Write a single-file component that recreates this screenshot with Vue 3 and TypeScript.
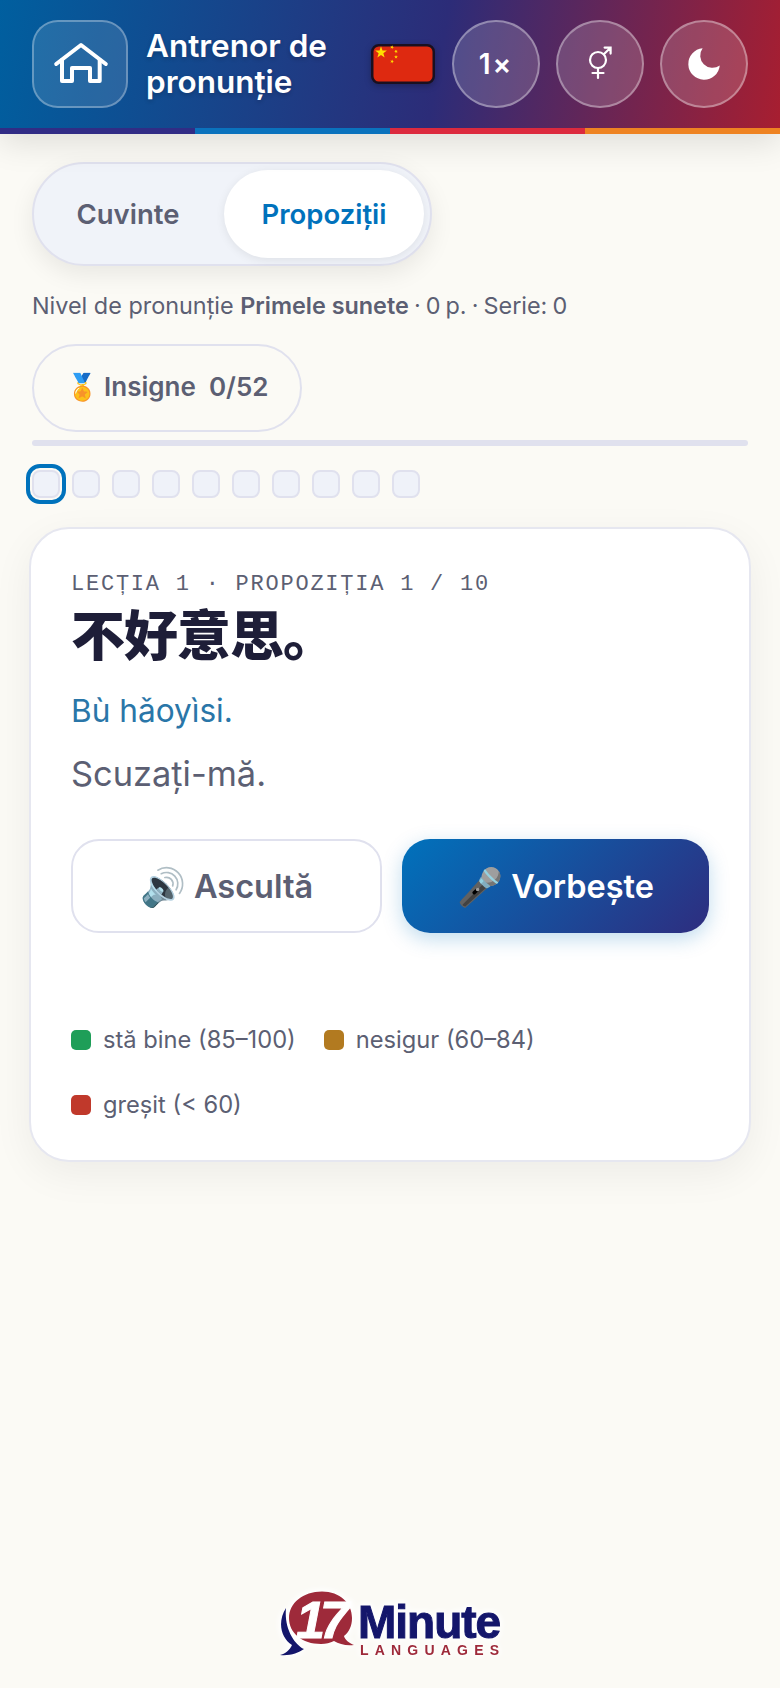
<template>
  <div class="page">
    <header class="topbar">
      <button class="home-btn" aria-label="Acasă">
        <svg viewBox="0 0 60 60" width="60" height="60" fill="none" stroke="#fff" stroke-width="4" stroke-linecap="round" stroke-linejoin="round">
          <path d="M6.2 30 L31 11 L55.8 30" />
          <path d="M12 26 V47 H22 V34 H40 V47 H49.7 V26" />
        </svg>
      </button>
      <h1 class="title">Antrenor de pronunție</h1>
      <svg class="flag" viewBox="0 0 64 40" width="64" height="40">
        <rect x="1.25" y="1.25" width="61.5" height="37.5" rx="6.5" fill="#de2910" stroke="#1a1020" stroke-width="2.5" />
        <polygon :points="star(10, 8.5, 6.2, 0)" fill="#ffde00" />
        <polygon :points="star(21, 3.2, 2, 20)" fill="#ffde00" />
        <polygon :points="star(25, 7.5, 2, 40)" fill="#ffde00" />
        <polygon :points="star(25, 13, 2, 0)" fill="#ffde00" />
        <polygon :points="star(21, 17.5, 2, 20)" fill="#ffde00" />
      </svg>
      <button class="round-btn speed">1×</button>
      <button class="round-btn" aria-label="Gen">
        <svg viewBox="0 0 40 40" width="40" height="40" fill="none" stroke="#fff" stroke-width="2.2" stroke-linecap="round">
          <circle cx="18" cy="16" r="8" />
          <path d="M18 24 V34 M12.5 29 H23.5" />
          <path d="M23.8 10.2 L30 4.2 M24.6 3.6 H30.6 V9.6" />
        </svg>
      </button>
      <button class="round-btn" aria-label="Temă">
        <svg viewBox="0 0 24 24" width="42" height="42" fill="#fff">
          <path d="M21 12.79A9 9 0 1 1 11.21 3 7 7 0 0 0 21 12.79z" />
        </svg>
      </button>
    </header>

    <main class="content">
      <div class="tabs">
        <button class="tab">Cuvinte</button>
        <button class="tab active">Propoziții</button>
      </div>

      <p class="status">Nivel de pronunție <b>Primele sunete</b><span class="score"> · 0 p. · Serie: 0</span></p>

      <button class="badges">🏅 Insigne&nbsp; 0/52</button>

      <div class="progress"></div>

      <div class="steps">
        <span v-for="n in 10" :key="n" class="step" :class="{ current: n === 1 }"></span>
      </div>

      <section class="card">
        <div class="label">LECȚIA 1 · PROPOZIȚIA 1 / 10</div>
        <div class="hanzi" lang="zh-CN">不好意思。</div>
        <div class="pinyin">Bù hǎoyìsi.</div>
        <div class="translation">Scuzați-mă.</div>

        <div class="actions">
          <button class="action listen"><span class="emoji">🔊</span> Ascultă</button>
          <button class="action speak"><span class="emoji">🎤</span> Vorbește</button>
        </div>

        <ul class="legend">
          <li v-for="item in legend" :key="item.text">
            <span class="swatch" :style="{ background: item.color }"></span>
            {{ item.text }}
          </li>
        </ul>
      </section>
    </main>

    <footer class="footer">
      <svg class="logo" viewBox="0 0 260 110" width="260" height="110">
        <path d="M26 38 C17 52 21 68 32 75 C30 80 25 84 20 85 C30 86 38 83 44 79 C34 74 24 58 26 38z" fill="#14166b" />
        <path d="M62 21.5 C80 21.5 92 33 92 48 C92 56 89 62 84 66 C85 70 89 73 94 75 C86 76 79 74 74 71 C70 73 66 74 61 74 C42 74 29 63 29 48 C29 33 43 21.5 62 21.5z" fill="#9e2a3a" />
        <text class="logo-num" x="36" y="68">17</text>
        <text class="logo-word" x="98" y="68">Minute</text>
        <text class="logo-sub" x="100" y="85">LANGUAGES</text>
      </svg>
    </footer>
  </div>
</template>

<script setup lang="ts">
const legend = [
  { color: "#1e9e58", text: "stă bine (85–100)" },
  { color: "#b27a20", text: "nesigur (60–84)" },
  { color: "#c0392b", text: "greșit (< 60)" },
];

// five-pointed star, returned as polygon points
function star(cx: number, cy: number, r: number, rot: number): string {
  const pts: string[] = [];
  for (let i = 0; i < 10; i++) {
    const rad = i % 2 === 0 ? r : r * 0.4;
    const a = ((i * 36 - 90 + rot) * Math.PI) / 180;
    pts.push(`${(cx + rad * Math.cos(a)).toFixed(2)},${(cy + rad * Math.sin(a)).toFixed(2)}`);
  }
  return pts.join(" ");
}
</script>

<style>
html,
body {
  margin: 0;
  background: #fbfaf5;
}
</style>

<style scoped>
.page {
  min-height: 1688px;
  display: flex;
  flex-direction: column;
  box-sizing: border-box;
  background: #fbfaf5;
  font-family: Inter, "Noto Sans CJK SC", sans-serif;
  color: #5c5f73;
}

button {
  font-family: inherit;
  padding: 0;
  cursor: pointer;
}

.topbar {
  position: relative;
  display: flex;
  align-items: center;
  box-sizing: border-box;
  height: 134px;
  padding: 20px 32px 26px;
  background: linear-gradient(100deg, #005f9f 0%, #2c2c78 56%, #a81e30 100%);
  box-shadow: 0 8px 32px rgba(0, 0, 0, 0.12);
}

.topbar::after {
  content: "";
  position: absolute;
  left: 0;
  right: 0;
  bottom: 0;
  height: 6px;
  background: linear-gradient(
    90deg,
    #312c85 0 25%,
    #0a72bd 25% 50%,
    #dc2a3e 50% 75%,
    #ee8322 75% 100%
  );
}

.home-btn {
  flex: none;
  display: flex;
  align-items: center;
  justify-content: center;
  width: 96px;
  height: 88px;
  border: 2px solid rgba(255, 255, 255, 0.3);
  border-radius: 26px;
  background: rgba(255, 255, 255, 0.12);
}

.title {
  flex: none;
  width: 225px;
  margin: 0 0 0 18px;
  font-size: 31.5px;
  line-height: 36px;
  font-weight: 600;
  color: #fff;
  text-shadow: 0 2px 4px rgba(0, 0, 0, 0.2);
}

.flag {
  flex: none;
  filter: drop-shadow(0 2px 3px rgba(0, 0, 0, 0.25));
}

.round-btn {
  flex: none;
  display: flex;
  align-items: center;
  justify-content: center;
  box-sizing: border-box;
  width: 88px;
  height: 88px;
  margin-left: 16px;
  border: 2px solid rgba(255, 255, 255, 0.35);
  border-radius: 50%;
  background: rgba(255, 255, 255, 0.16);
  color: #fff;
}

.flag + .round-btn {
  margin-left: 17px;
}

.speed {
  font-size: 28px;
  font-weight: 600;
  letter-spacing: 2px;
}

.content {
  display: flex;
  flex-direction: column;
  align-items: flex-start;
  padding: 28px 32px 0;
}

.tabs {
  display: flex;
  gap: 8px;
  box-sizing: border-box;
  width: 400px;
  height: 104px;
  padding: 6px;
  border: 2px solid #e0e1ee;
  border-radius: 52px;
  background: #f0f3f9;
  box-shadow: 0 8px 24px rgba(0, 0, 0, 0.08);
}

.tab {
  flex: none;
  width: 176px;
  height: 88px;
  border: 0;
  border-radius: 44px;
  background: transparent;
  font-size: 27.5px;
  font-weight: 600;
  color: #5c5f73;
}

.tab.active {
  width: 200px;
  background: #fff;
  color: #0072bc;
  box-shadow: 0 2px 10px rgba(0, 0, 0, 0.08);
}

.status {
  margin: 24px 0 0;
  font-size: 23.4px;
  line-height: 32px;
}

.status b {
  font-weight: 600;
}

.score {
  word-spacing: -1.5px;
}

.badges {
  box-sizing: border-box;
  width: 270px;
  height: 88px;
  margin-top: 22px;
  padding-bottom: 4px;
  border: 2px solid #e0e1ee;
  border-radius: 44px;
  background: transparent;
  font-size: 26px;
  font-weight: 600;
  color: #5c5f73;
}

.progress {
  align-self: stretch;
  height: 6px;
  margin-top: 8px;
  border-radius: 3px;
  background: #e0e1ee;
}

.steps {
  display: flex;
  gap: 12px;
  margin-top: 24px;
}

.step {
  box-sizing: border-box;
  width: 28px;
  height: 28px;
  border: 2px solid #e0e1ee;
  border-radius: 8px;
  background: #eff2f9;
}

.step.current {
  outline: 4px solid #0072bc;
  outline-offset: 2px;
}

.card {
  align-self: stretch;
  box-sizing: border-box;
  height: 635px;
  margin: 29px -3px 0;
  padding: 42px 40px 40px;
  border: 2px solid #e6e7f0;
  border-radius: 40px;
  background: #fff;
  box-shadow: 0 12px 40px rgba(0, 0, 0, 0.06);
}

.label {
  font-family: "Liberation Mono", monospace;
  font-size: 22px;
  line-height: 28px;
  letter-spacing: 0.08em;
}

.hanzi {
  font-size: 54px;
  line-height: 76px;
  font-weight: 800;
  letter-spacing: -1px;
  color: #1e1e38;
}

.pinyin {
  margin-top: 16px;
  font-size: 31.6px;
  line-height: 40px;
  color: #2a76a8;
}

.translation {
  margin-top: 19px;
  font-size: 34.4px;
  line-height: 48px;
}

.actions {
  display: flex;
  gap: 20px;
  margin-top: 41px;
}

.action {
  flex: 1;
  height: 94px;
  border-radius: 28px;
  font-size: 32.5px;
  font-weight: 600;
}

.emoji {
  font-size: 37px;
  line-height: 1;
  vertical-align: -2px;
}

.listen {
  border: 2px solid #e0e1ee;
  background: #fff;
  color: #5c5f73;
}

.speak {
  border: 0;
  background: linear-gradient(135deg, #0072bc, #2e2d7f);
  color: #fff;
  box-shadow: 0 6px 20px rgba(0, 114, 188, 0.25);
}

.legend {
  display: flex;
  flex-wrap: wrap;
  gap: 29px 28px;
  margin: 89px 0 0;
  padding: 0;
  list-style: none;
  font-size: 23.7px;
  line-height: 36px;
}

.legend li {
  display: flex;
  align-items: center;
  gap: 12px;
}

.swatch {
  width: 20px;
  height: 20px;
  border-radius: 5px;
}

.footer {
  display: flex;
  justify-content: center;
  margin-top: auto;
  padding-bottom: 8px;
}

.logo {
  filter: drop-shadow(0 0 3px #fff) drop-shadow(0 0 3px #fff);
}

.logo-num {
  font-family: "Liberation Sans", sans-serif;
  font-size: 52px;
  font-weight: 700;
  font-style: italic;
  letter-spacing: -5px;
  fill: #fff;
  stroke: #fff;
  stroke-width: 1px;
}

.logo-word {
  font-family: "Liberation Sans", sans-serif;
  font-size: 46px;
  font-weight: 700;
  letter-spacing: -1px;
  fill: #14166b;
  stroke: #14166b;
  stroke-width: 1px;
}

.logo-sub {
  font-family: "Liberation Sans", sans-serif;
  font-size: 14px;
  font-weight: 700;
  letter-spacing: 6.2px;
  fill: #9e2a3a;
}
</style>
